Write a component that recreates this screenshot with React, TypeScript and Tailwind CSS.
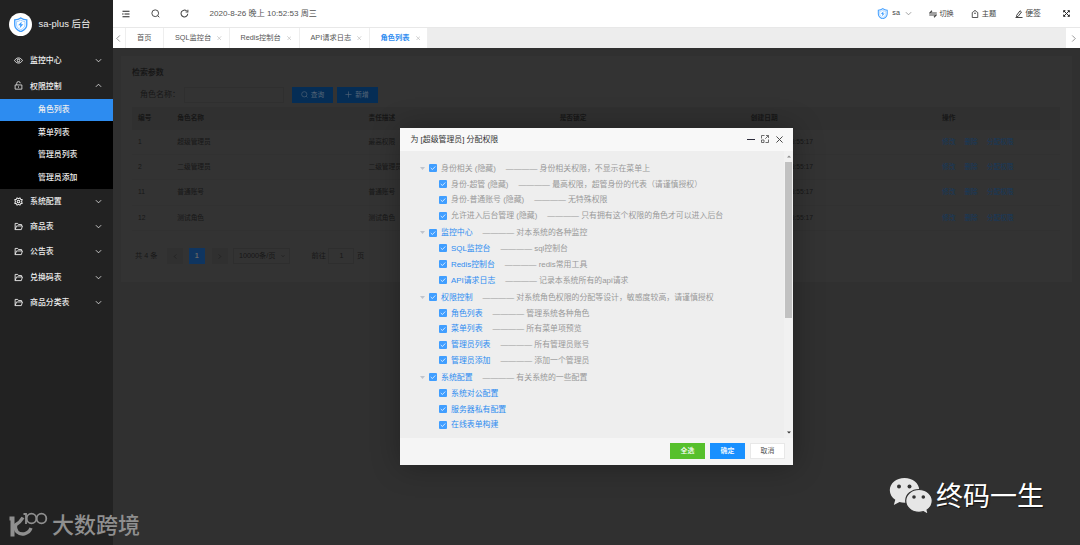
import type { ReactNode } from "react";

type Node = { label: string; desc?: string; hidden?: boolean; children?: Node[] };

const TREE: Node[] = [
  {
    label: "身份相关 (隐藏)",
    desc: "身份相关权限，不显示在菜单上",
    hidden: true,
    children: [
      { label: "身份-超管 (隐藏)", desc: "最高权限，超管身份的代表（请谨慎授权）", hidden: true },
      { label: "身份-普通账号 (隐藏)", desc: "无特殊权限", hidden: true },
      { label: "允许进入后台管理 (隐藏)", desc: "只有拥有这个权限的角色才可以进入后台", hidden: true },
    ],
  },
  {
    label: "监控中心",
    desc: "对本系统的各种监控",
    children: [
      { label: "SQL监控台", desc: "sql控制台" },
      { label: "Redis控制台", desc: "redis常用工具" },
      { label: "API请求日志", desc: "记录本系统所有的api请求" },
    ],
  },
  {
    label: "权限控制",
    desc: "对系统角色权限的分配等设计，敏感度较高，请谨慎授权",
    children: [
      { label: "角色列表", desc: "管理系统各种角色" },
      { label: "菜单列表", desc: "所有菜单项预览" },
      { label: "管理员列表", desc: "所有管理员账号" },
      { label: "管理员添加", desc: "添加一个管理员" },
    ],
  },
  {
    label: "系统配置",
    desc: "有关系统的一些配置",
    children: [{ label: "系统对公配置" }, { label: "服务器私有配置" }, { label: "在线表单构建" }],
  },
];

const ROWS = [
  { id: "1", name: "超级管理员", desc: "最高权限" },
  { id: "2", name: "二级管理员", desc: "二级管理员" },
  { id: "11", name: "普通账号", desc: "普通账号" },
  { id: "12", name: "测试角色", desc: "测试角色" },
];

const TABS = [
  { name: "首页", width: "w-[38px]" },
  { name: "SQL监控台", width: "w-[65.5px]" },
  { name: "Redis控制台", width: "w-[70px]" },
  { name: "API请求日志", width: "w-[70px]" },
  { name: "角色列表", width: "w-[58.5px]" },
];

function Icon({ className, children, weight = 1.4 }: { className: string; children: ReactNode; weight?: number }) {
  return (
    <svg
      className={`shrink-0 ${className}`}
      viewBox="0 0 16 16"
      fill="none"
      stroke="currentColor"
      strokeWidth={weight}
    >
      {children}
    </svg>
  );
}

function Shield({ className }: { className: string }) {
  return (
    <Icon className={className}>
      <path d="M8 1C6.2 2.4 4 3 1.8 3v5c0 3.4 2.6 5.7 6.2 7.2 3.6-1.5 6.2-3.8 6.2-7.2V3C12 3 9.8 2.4 8 1Z" />
      <path d="M8 3.200C6.7 4.1 5.2 4.6 3.7 4.700V8c0 2.3 1.7 4 4.3 5.2 2.6-1.2 4.3-2.9 4.3-5.2V4.700C10.8 4.6 9.3 4.1 8 3.200Z" strokeWidth="0.5" />
      <path d="M9 4.600 5.300 8.500h2.200L7 11.600l3.700-4H8.500Z" fill="currentColor" stroke="none" />
    </Icon>
  );
}

function Chevron({ up = false, className = "w-[7px] h-[7px]" }: { up?: boolean; className?: string }) {
  return (
    <Icon className={className} weight={1.8}>
      <path d={up ? "M2 11l6-6 6 6" : "M2 5l6 6 6-6"} />
    </Icon>
  );
}

function Folder() {
  return (
    <Icon className="w-[9px] h-[9px]" weight={1.6}>
      <path d="M2 13.500V2.500h4.500L8 4.500h5.500V7M2 13.500 4.500 7H15l-2 6.500Z" />
    </Icon>
  );
}

function Eye() {
  return (
    <Icon className="w-[9px] h-[9px]" weight={1.7}>
      <path d="M1 8c2-3.200 4.200-4.500 7-4.500S13 4.800 15 8c-2 3.200-4.200 4.500-7 4.500S3 11.200 1 8Z" />
      <circle cx="8" cy="8" r="2.3" />
    </Icon>
  );
}

function Lock() {
  return (
    <Icon className="w-[9px] h-[9px]" weight={1.4}>
      <path d="M2 7h12v7.500H2ZM4.800 7V4.500a3.200 3.200 0 0 1 6.400-.5M8 9.500v2.500" />
    </Icon>
  );
}

function Gear() {
  return (
    <Icon className="w-[9px] h-[9px]" weight={1.8}>
      <path d="M5.500 1.500 8 2.800l2.500-1.300 1.300 2.500 2.700.8L13.500 8l1 3.200-2.700.8-1.300 2.500L8 13.200l-2.500 1.300L4.200 12l-2.700-.8 1-3.200-1-3.200 2.700-.8Z" />
      <circle cx="8" cy="8" r="2.4" />
    </Icon>
  );
}

function MenuItem({ icon, name, open = false }: { icon: ReactNode; name: string; open?: boolean }) {
  return (
    <div className="flex h-[25.3px] items-center pl-[13.5px] pr-[10.5px] text-[7.9px] text-[#eee]">
      {icon}
      <span className="ml-[7.5px] flex-1 pt-px font-medium">{name}</span>
      <Chevron up={open} />
    </div>
  );
}

function SubMenuItem({ name, active = false }: { name: string; active?: boolean }) {
  return <div className={`flex h-[22.5px] items-center pl-[38px] pt-px ${active ? "bg-[#2d8cf0]" : ""}`}>{name}</div>;
}

function Sidebar() {
  return (
    <aside className="w-[112.5px] shrink-0 bg-[#222]">
      <div className="flex h-12 items-center pl-[9px] pt-px">
        <span className="flex h-[23px] w-[23px] items-center justify-center rounded-full bg-white text-[#409eff]">
          <Shield className="h-[15.5px] w-[15.5px]" />
        </span>
        <span className="ml-[6.5px] text-[9.45px] text-[#eee]">sa-plus 后台</span>
      </div>
      <MenuItem icon={<Eye />} name="监控中心" />
      <MenuItem icon={<Lock />} name="权限控制" open />
      <div className="bg-black text-[7.9px] font-medium text-[#eee]">
        <SubMenuItem name="角色列表" active />
        <SubMenuItem name="菜单列表" />
        <SubMenuItem name="管理员列表" />
        <SubMenuItem name="管理员添加" />
      </div>
      <MenuItem icon={<Gear />} name="系统配置" />
      <MenuItem icon={<Folder />} name="商品表" />
      <MenuItem icon={<Folder />} name="公告表" />
      <MenuItem icon={<Folder />} name="兑换码表" />
      <MenuItem icon={<Folder />} name="商品分类表" />
    </aside>
  );
}

function TopBar() {
  return (
    <header className="flex h-[27px] items-center bg-white pl-[9.5px] pr-[10.5px] text-[#444]">
      <Icon className="h-2 w-2 text-[#222]" weight={2}>
        <path d="M1 2.500h14M5 8h10M1 13.500h14" />
        <path d="M1 5.800v4.400L3.800 8Z" fill="currentColor" stroke="none" />
      </Icon>
      <Icon className="ml-[20.5px] h-[9px] w-[9px]" weight={1.7}>
        <circle cx="7.5" cy="7.5" r="6" />
        <path d="m11.800 11.800 3 3" />
      </Icon>
      <Icon className="ml-[20.5px] h-[9px] w-[9px]" weight={1.8}>
        <path d="M13.800 8.500a6 6 0 1 1-2-5" />
        <path d="M14 1.500v4h-4" />
      </Icon>
      <span className="ml-[20.5px] flex-1 pt-[2px] text-[8.08px] leading-none text-[#555]">2020-8-26 晚上 10:52:53 周三</span>
      <Shield className="h-[11.5px] w-[11.5px] text-[#409eff]" />
      <span className="ml-[4px] text-[7.2px]">sa</span>
      <Chevron className="ml-[5px] h-[7px] w-[7px] text-[#888]" />
      <Icon className="ml-[17.5px] h-2 w-2" weight={2.2}>
        <path d="M15.500 6H1.500L6 1.500M.5 10h14L10 14.500" />
      </Icon>
      <span className="ml-[2px] pt-px text-[7.2px]">切换</span>
      <Icon className="ml-[17.5px] h-2 w-2" weight={1.8}>
        <path d="M2.500 5 5 3.500c.5-3 5.500-3 6 0L13.500 5v10h-11Z" />
        <path d="M6 6.500h4" />
      </Icon>
      <span className="ml-[2.5px] pt-px text-[7.2px]">主题</span>
      <Icon className="ml-[18.5px] h-2 w-2" weight={2}>
        <path d="m3 11 7-9.500 3 2.500-6.500 8.500-3.500 1ZM1 15h14" />
      </Icon>
      <span className="ml-[2.5px] pt-px text-[7.9px]">便签</span>
      <Icon className="ml-[21.5px] h-[7px] w-[7px] text-[#222]" weight={2.2}>
        <path d="M1.500 1.500l13 13M14.500 1.500l-13 13M1.500 5.500v-4h4M10.500 1.500h4v4M14.500 10.500v4h-4M5.500 14.500h-4v-4" />
      </Icon>
    </header>
  );
}

function TabBar() {
  return (
    <nav className="flex h-[21px] border-t border-[#e8e8e8] bg-[#ededed] text-[7.25px] text-[#555]">
      <div className="flex w-[13.5px] items-center justify-center border-r border-[#eee] bg-white">
        <Icon className="h-[7px] w-[7px]">
          <path d="M11 1 4 8l7 7" />
        </Icon>
      </div>
      {TABS.map((tab, i) => (
        <div
          key={tab.name}
          className={`${tab.width} flex shrink-0 items-center border-r border-[#eee] bg-white pl-[11px] ${
            i === 4 ? "font-bold text-[#2d8cf0]" : ""
          }`}
        >
          <span className="whitespace-nowrap">{tab.name}</span>
          {i > 0 && (
            <Icon className="ml-[6px] h-[4.5px] w-[4.5px] text-[#aaa]" weight={1.8}>
              <path d="M1 1l14 14M15 1 1 15" />
            </Icon>
          )}
        </div>
      ))}
      <div className="ml-auto flex w-[14px] items-center justify-center bg-white">
        <Icon className="h-[7px] w-[7px]">
          <path d="m5 1 7 7-7 7" />
        </Icon>
      </div>
    </nav>
  );
}

const COLS = "grid grid-cols-[39.3px_191.2px_191.2px_191.2px_191.2px_1fr] items-center [&>*]:pl-[6px]";

function RoleTable() {
  return (
    <div className="mt-[4.5px] text-[6.7px] text-[#171717]">
      <div className={`${COLS} h-[23px] bg-[#303030] font-bold`}>
        <span>编号</span>
        <span>角色名称</span>
        <span>责任描述</span>
        <span>是否锁定</span>
        <span>创建日期</span>
        <span>操作</span>
      </div>
      {ROWS.map((row) => (
        <div key={row.id} className={`${COLS} h-[25.2px] border-b border-[#313131]`}>
          <span>{row.id}</span>
          <span>{row.name}</span>
          <span>{row.desc}</span>
          <span />
          <span>2020-08-26 15:55:17</span>
          <span className="flex gap-[9px] text-[#15395e]">
            <a>修改</a>
            <a>删除</a>
            <a>分配权限</a>
          </span>
        </div>
      ))}
    </div>
  );
}

function Pagination() {
  return (
    <div className="mt-[17.5px] flex h-4 items-center pl-[3px] text-[7.2px] text-[#171717]">
      <span className="w-[32px]">共 4 条</span>
      <span className="flex h-4 w-4 items-center justify-center bg-[#303030]">
        <Icon className="h-[5px] w-[5px]">
          <path d="M11 1 4 8l7 7" />
        </Icon>
      </span>
      <span className="ml-[5.5px] flex h-4 w-[16.5px] items-center justify-center bg-[#0f3560] font-bold text-[#666]">1</span>
      <span className="ml-[6.5px] flex h-4 w-4 items-center justify-center bg-[#303030]">
        <Icon className="h-[5px] w-[5px]">
          <path d="m5 1 7 7-7 7" />
        </Icon>
      </span>
      <span className="ml-[5.5px] flex h-4 w-[57px] items-center justify-between border border-[#2e2e2e] pl-[5px] pr-[4px]">
        10000条/页
        <Chevron className="h-[4px] w-[4px]" />
      </span>
      <span className="ml-[21.5px]">前往</span>
      <span className="ml-[2.5px] flex h-4 w-[26px] items-center justify-center border border-[#2e2e2e]">1</span>
      <span className="ml-[2.5px]">页</span>
    </div>
  );
}

function RolePage() {
  return (
    <main className="flex-1 bg-[#303030] px-2 pt-2 text-[#171717]">
      <section className="h-[225.5px] bg-[#333] pl-[11.5px] pr-3 pt-[8.5px]">
        <h4 className="h-[14px] text-[7.9px] font-bold leading-[15px]">检索参数</h4>
        <div className="mt-[8.5px] flex h-[15.5px] items-center pl-2">
          <span className="w-[44px] text-[8px]">角色名称：</span>
          <span className="h-[15.5px] w-[99.5px] border border-[#2f2f2f]" />
          <span className="ml-[8.5px] flex h-[15.5px] w-[41px] items-center justify-center gap-[3px] bg-[#052d55] text-[6.7px] text-[#566678]">
            <Icon className="h-[7px] w-[7px]">
              <circle cx="7.5" cy="7.5" r="6" />
              <path d="m11.800 11.800 3 3" />
            </Icon>
            查询
          </span>
          <span className="ml-[3.5px] flex h-[15.5px] w-[41px] items-center justify-center gap-[3px] bg-[#052d55] text-[6.7px] text-[#566678]">
            <Icon className="h-[7px] w-[7px]">
              <path d="M8 1v14M1 8h14" />
            </Icon>
            新增
          </span>
        </div>
        <RoleTable />
        <Pagination />
      </section>
    </main>
  );
}

function TreeRow({ node, leaf = false }: { node: Node; leaf?: boolean }) {
  return (
    <div className={`flex h-[15.8px] items-center whitespace-nowrap text-[7.9px] ${leaf ? "pl-[39px]" : "pl-[20px]"}`}>
      {!leaf && (
        <svg className="mr-[4px] h-[3px] w-[5px] shrink-0" viewBox="0 0 10 6">
          <path d="M0 0h10L5 6Z" fill="#c0c4cc" />
        </svg>
      )}
      <span className="flex h-2 w-2 shrink-0 items-center justify-center rounded-[1px] bg-[#409eff] text-white">
        <Icon className="h-[6px] w-[6px]" weight={2}>
          <path d="m2 8 4.500 4L14 4" />
        </Icon>
      </span>
      <span className={`ml-[4.5px] pt-px ${node.hidden ? "text-[#999]" : "text-[#2d8cf0]"}`}>{node.label}</span>
      {node.desc && <span className="ml-[10px] pt-px text-[#999]">———— {node.desc}</span>}
    </div>
  );
}

function AuthDialog() {
  return (
    <div className="absolute left-[399.5px] top-[127.5px] flex h-[337.5px] w-[393.5px] flex-col bg-[#eee] shadow-[1px_1px_28px_rgba(0,0,0,0.3)]">
      <div className="flex h-[23.5px] shrink-0 items-center bg-[#f8f8f8] pl-[11px] pr-[10px] text-[#333]">
        <span className="flex-1 pt-px text-[7.9px]">为 [超级管理员] 分配权限</span>
        <span className="mt-px h-px w-2 bg-[#2d2c3b]" />
        <Icon className="ml-[6.5px] h-2 w-2 text-[#555]" weight={1.7}>
          <path d="M7 1H1v6M9 15h6V9M1 10v5h5v-5ZM10 1h5v5M15 1 8.500 7.500" />
        </Icon>
        <Icon className="ml-[7px] h-[7px] w-[7px] text-[#444]" weight={2.2}>
          <path d="M1 1l14 14M15 1 1 15" />
        </Icon>
      </div>
      <div className="flex min-h-0 flex-1">
        <div className="flex-1 pt-[8px]">
          {TREE.map((group) => (
            <div key={group.label} className="mt-[1.3px]">
              <TreeRow node={group} />
              {group.children?.map((child) => (
                <TreeRow key={child.label} node={child} leaf />
              ))}
            </div>
          ))}
        </div>
        <div className="flex w-[9px] flex-col items-center bg-[#f1f1f1]">
          <svg className="mt-[4px] h-[3px] w-[4px]" viewBox="0 0 8 6">
            <path d="M0 5h8L4 1Z" fill="#888" />
          </svg>
          <div className="mt-[3.5px] h-[156.5px] w-[7.5px] bg-[#c1c1c1]" />
          <svg className="mb-[4px] mt-auto h-[3px] w-[4px]" viewBox="0 0 8 6">
            <path d="M0 1h8L4 5Z" fill="#333" />
          </svg>
        </div>
      </div>
      <div className="flex h-[27.5px] shrink-0 items-center justify-end gap-[5px] bg-[#f5f5f5] pr-2 text-[6.9px]">
        <button className="h-4 w-[35px] bg-[#56c02c] font-medium text-white">全选</button>
        <button className="h-4 w-[35px] bg-[#1890ff] font-medium text-white">确定</button>
        <button className="h-4 w-[35px] border border-[#e8e8e8] bg-white text-[#555]">取消</button>
      </div>
    </div>
  );
}

function Watermarks() {
  return (
    <>
      <div className="absolute left-[889px] top-[474px] flex items-center">
        <svg className="h-[40px] w-[44px]" viewBox="0 0 44 40">
          <path
            d="M15.500 3C7.300 3 .8 8.300.8 15.300c0 4 2.200 7.300 5.500 9.500L4.800 30l5.700-3c1.700.5 3.300.7 5 .7 8.200 0 14.800-5.400 14.800-12.400S23.700 3 15.500 3Z"
            fill="#e6e6e6"
          />
          <circle cx="10" cy="11.5" r="2" fill="#333" />
          <circle cx="20.5" cy="11.5" r="2" fill="#333" />
          <path
            d="M30 14.500c-7.400 0-13.300 5-13.300 11.300S22.600 37.300 30 37.300c1.500 0 3-.3 4.300-.6l5 2.800-1.200-4.500c3.200-2.100 5.200-5.400 5.200-9.200 0-6.300-5.900-11.300-13.300-11.300Z"
            fill="#e6e6e6"
            stroke="#303030"
            strokeWidth="1.2"
          />
          <circle cx="25" cy="22" r="1.8" fill="#333" />
          <circle cx="34.3" cy="22" r="1.8" fill="#333" />
        </svg>
        <span className="ml-[3px] mt-[5px] text-[27px] leading-[36px] text-white [text-shadow:1px_1px_1px_#111]">终码一生</span>
      </div>
      <div className="absolute left-[9px] top-[511px] flex items-center text-[#8f8f8f]">
        <svg className="h-[28px] w-[39px]" viewBox="0 0 39 28" fill="none" stroke="currentColor">
          <path d="M.5 6.500h3V24.500" strokeWidth="4" />
          <path d="M14 5.500C12 9 9 11.500 6.500 13c-1 6 3 10 9 8.800 3-.8 5.500-3 6.500-5.800" strokeWidth="3.4" />
          <path d="M14.500 2h2.500v10" strokeWidth="1.8" />
          <circle cx="22.500" cy="6.500" r="4.800" strokeWidth="1.8" />
          <circle cx="32.500" cy="6.500" r="4.800" strokeWidth="1.8" />
        </svg>
        <span className="ml-[4px] text-[22px] font-medium leading-[30px]">大数跨境</span>
      </div>
    </>
  );
}

export default function App() {
  return (
    <div className="relative flex h-[545px] w-[1080px] overflow-hidden bg-[#303030] font-['Liberation_Sans','Noto_Sans_CJK_SC',sans-serif]">
      <Sidebar />
      <div className="flex min-w-0 flex-1 flex-col">
        <TopBar />
        <TabBar />
        <RolePage />
      </div>
      <AuthDialog />
      <Watermarks />
    </div>
  );
}
